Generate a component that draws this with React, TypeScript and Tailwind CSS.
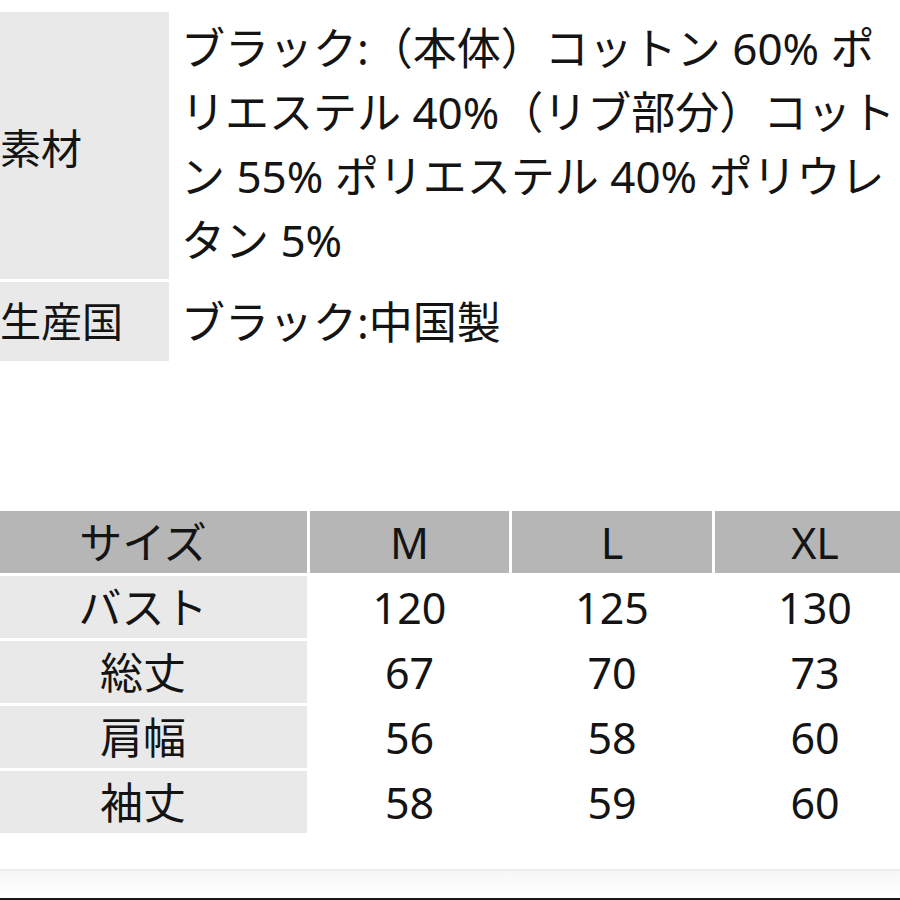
import React from 'react'

const FONT = { fontFamily: '"Noto Sans", "Noto Sans CJK JP", sans-serif' }

const MATERIAL_LINES = [
  'ブラック:（本体）コットン 60% ポ',
  'リエステル 40%（リブ部分）コット',
  'ン 55% ポリエステル 40% ポリウレ',
  'タン 5%',
]

const SIZES = ['M', 'L', 'XL']
const ROWS: { label: string; values: string[] }[] = [
  { label: 'バスト', values: ['120', '125', '130'] },
  { label: '総丈', values: ['67', '70', '73'] },
  { label: '肩幅', values: ['56', '58', '60'] },
  { label: '袖丈', values: ['58', '59', '60'] },
]

export default function App() {
  return (
    <div className="w-[900px] h-[900px] bg-white text-[#141414] overflow-hidden relative" style={FONT}>
      {/* Spec table */}
      <div className="pt-[12px] grid grid-cols-[169px_1fr] gap-y-[3px] gap-x-[3px]">
        <div className="bg-[#e9e9e9] flex items-center text-[41px] leading-none pt-[6px]">素材</div>
        <div className="pl-[9px] pt-[4px] pb-[7px] text-[44px] leading-[64px] whitespace-nowrap">
          {MATERIAL_LINES.map(l => (
            <div key={l}>{l}</div>
          ))}
        </div>
        <div className="bg-[#e9e9e9] h-[79px] flex items-center text-[41px] leading-none">生産国</div>
        <div className="pl-[9px] h-[79px] flex items-center text-[44px] leading-none">ブラック:中国製</div>
      </div>

      {/* Size table */}
      <div className="mt-[150px] w-[920px] grid grid-cols-[307px_199px_200px_200px] gap-[3px] text-[43px] leading-none">
        <div className="bg-[#b6b6b6] h-[62px] flex items-center justify-center pr-[21px]">サイズ</div>
        {SIZES.map(s => (
          <div key={s} className="bg-[#b6b6b6] h-[62px] flex items-center justify-center">{s}</div>
        ))}
        {ROWS.map(r => (
          <React.Fragment key={r.label}>
            <div className="bg-[#e9e9e9] h-[62px] flex items-center justify-center pr-[21px]">{r.label}</div>
            {r.values.map((v, i) => (
              <div key={i} className="h-[62px] flex items-center justify-center">{v}</div>
            ))}
          </React.Fragment>
        ))}
      </div>

      {/* Bottom edge */}
      <div className="absolute left-0 right-0 bottom-0 h-[31px] border-t-2 border-[#eeeeee] bg-gradient-to-b from-[#f7f7f7] to-white">
        <div className="absolute left-0 right-0 bottom-0 h-[2px] bg-[#1a1a1a]" />
      </div>
    </div>
  )
}
